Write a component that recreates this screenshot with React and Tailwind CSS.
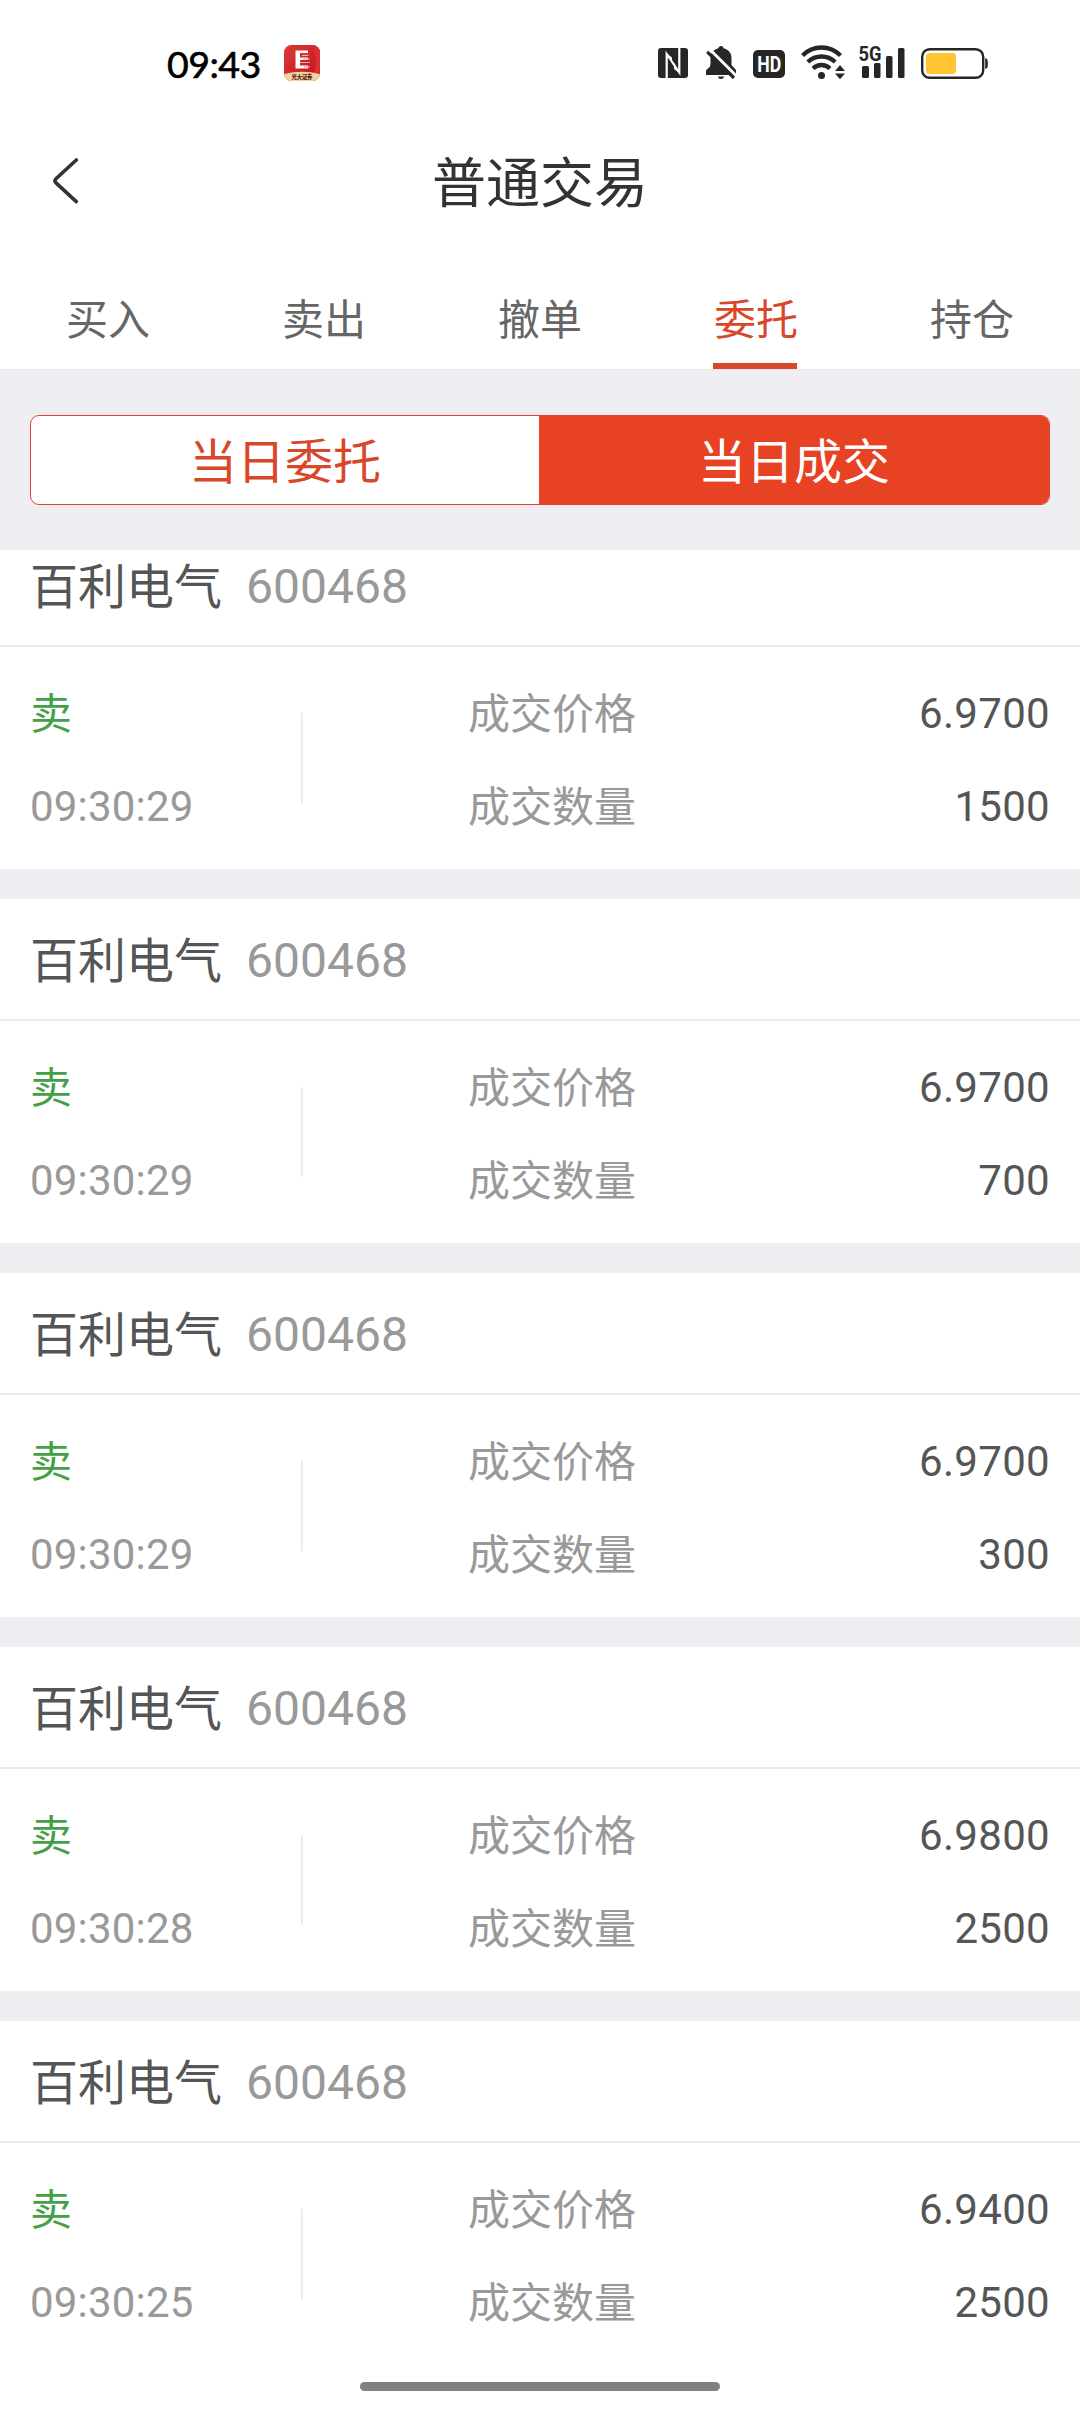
const trades = [
  { time: '09:30:29', price: '6.9700', amount: '1500' },
  { time: '09:30:29', price: '6.9700', amount: '700' },
  { time: '09:30:29', price: '6.9700', amount: '300' },
  { time: '09:30:28', price: '6.9800', amount: '2500' },
  { time: '09:30:25', price: '6.9400', amount: '2500' },
];

const tabs = ['买入', '卖出', '撤单', '委托', '持仓'];

function BrokerIcon() {
  return (
    <svg width="36" height="36" viewBox="0 0 36 36">
      <defs>
        <clipPath id="tile"><rect width="36" height="36" rx="7.5" /></clipPath>
        <linearGradient id="red" x1="0" y1="0" x2="1" y2="1">
          <stop offset="0" stopColor="#dd3a3a" />
          <stop offset="1" stopColor="#c01216" />
        </linearGradient>
      </defs>
      <g clipPath="url(#tile)">
        <rect width="36" height="36" fill="url(#red)" />
        <path d="M28 0 Q35 12 30 28 L36 28 V0Z" fill="#d63030" />
        <path d="M0 29 Q18 24.5 36 29 V36 H0Z" fill="#f3d3a2" />
        <path d="M11.500 5.500H24V8H16V12.500H24V15H16V20.500H24V23.500H11.500Z" fill="#fff" />
        <path d="M18 10.300H24.500M16 17.500H26M20 21.800H26M19 14H26" stroke="#f3a9a4" strokeWidth="1.200" />
        <text x="18" y="34" fontSize="5.400" fontWeight="900" textAnchor="middle" fill="#5a2414" textLength="21">光大证券</text>
      </g>
    </svg>
  );
}

function StatusBar() {
  return (
    <div className="flex h-[125px] shrink-0 items-start pt-[45px] pr-[92px] pl-[167px]">
      <span className="h-9 w-[117px] font-['Lato'] text-[37.5px] leading-[37px] tracking-[-0.5px] text-black [-webkit-text-stroke:0.6px_black]">09:43</span>
      <BrokerIcon />
      <div className="ml-auto flex h-[34px] text-[#262626]">
        <svg className="mr-[18px]" width="30" height="34" viewBox="0 0 30 34">
          <rect y="3" width="30" height="30" rx="3" fill="currentColor" />
          <path d="M8.700 33V9L21.300 27.500V3" fill="none" stroke="#fff" strokeWidth="2.200" />
          <path d="M8.700 8.500L14 12.500V18ZM21.300 28L16 24V18Z" fill="#fff" />
        </svg>
        <svg className="mr-[17px]" width="30" height="34" viewBox="0 0 30 34">
          <path d="M15 1C16.600 1 17.300 2 17.500 3.200C22.500 4.500 25.500 8 25.500 13V20L30 25V30H0V26Q0 24.500 2 23.500Q4.500 22 4.500 19V13C4.500 8 7.500 4.500 12.500 3.200C12.700 2 13.400 1 15 1Z" fill="currentColor" />
          <path d="M11.800 31.500H18.200Q17.500 34 15 34Q12.500 34 11.800 31.500Z" fill="currentColor" />
          <path d="M3.200 3.800L31.500 32.100" stroke="#fff" strokeWidth="3" />
          <path d="M0 4L0 0H6Z" fill="#fff" />
          <path d="M1.200 6.800L28 33" stroke="currentColor" strokeWidth="3.200" />
        </svg>
        <svg className="mr-4 overflow-visible" width="32" height="34" viewBox="0 0 32 34">
          <rect y="5" width="32" height="28" rx="5" fill="currentColor" />
          <text x="4.300" y="26.700" fontFamily="Roboto" fontSize="22" fontWeight="700" textLength="24" lengthAdjust="spacingAndGlyphs" fill="#fff">HD</text>
        </svg>
        <svg className="mr-3.5" width="44" height="34" viewBox="0 0 44 34">
          <g fill="none" stroke="currentColor" strokeWidth="4.300">
            <path d="M1.500 10.500Q9.500 2.500 20.500 2.500Q31.500 2.500 39.500 10.500" />
            <path d="M6.800 17Q12.500 11.500 20.500 11.500Q28.500 11.500 34.200 17" />
            <path d="M12 23.500Q15.800 20 20.500 20Q25.200 20 29 23.500" />
          </g>
          <circle cx="20.500" cy="30.500" r="3.500" fill="currentColor" />
          <path d="M39 20L44 26H34ZM39 34.200L34 28.500H44Z" fill="currentColor" />
        </svg>
        <svg className="mr-4 overflow-visible" width="46" height="34" viewBox="0 0 46 34">
          <g fill="currentColor">
            <rect x="3" y="21" width="7" height="12" rx="1.500" />
            <rect x="15" y="18" width="6.500" height="15" rx="1.500" />
            <rect x="27" y="11" width="6.500" height="22" rx="1.500" />
            <rect x="39" y="3" width="6.500" height="30" rx="1.500" />
            <text x="-0.500" y="16" fontFamily="Roboto" fontSize="20.500" fontWeight="700" textLength="23" lengthAdjust="spacingAndGlyphs">5G</text>
          </g>
        </svg>
        <svg width="67" height="34" viewBox="0 0 67 34">
          <rect x="1.200" y="4.200" width="61" height="28.600" rx="7.500" fill="none" stroke="currentColor" strokeWidth="2.400" />
          <rect x="5" y="8" width="30" height="21" rx="3.500" fill="#ffc431" />
          <path d="M64.200 13Q66.800 13.500 66.800 16V21Q66.800 23.500 64.200 24Z" fill="currentColor" />
        </svg>
      </div>
    </div>
  );
}

function TradeCard({ time, price, amount }) {
  return (
    <article className="h-[344px] shrink-0 bg-white">
      <header className="flex h-[122px] items-center gap-6 border-b-2 border-[#ebebeb] px-[30px] text-5xl">
        <span className="pt-1.5 text-[#555]">百利电气</span>
        <span className="pt-[3px] text-[#999]">600468</span>
      </header>
      <div className="flex px-[30px] pt-[45px] text-[42px] leading-[46px] text-[#999]">
        <div className="flex w-[271px] flex-col gap-[46px]">
          <span className="text-[#43a047]">卖</span>
          <span className="tracking-[0.2px]">{time}</span>
        </div>
        <div className="mt-[21px] h-[90px] w-0.5 bg-[#ebebeb]" />
        <div className="ml-[165px] flex flex-col gap-[47px]">
          <span>成交价格</span>
          <span>成交数量</span>
        </div>
        <div className="-mt-px ml-auto flex flex-col gap-[47px] text-right tracking-[0.3px] text-[#555]">
          <span>{price}</span>
          <span>{amount}</span>
        </div>
      </div>
    </article>
  );
}

export default function App() {
  return (
    <div className="flex h-[2412px] w-[1080px] flex-col overflow-hidden bg-white font-['Roboto','Noto_Sans_CJK_SC',sans-serif]">
      <StatusBar />
      <div className="grid h-[115px] shrink-0 grid-cols-3 items-center px-[50px]">
        <svg width="30" height="50" viewBox="0 0 30 50" fill="none" stroke="#333" strokeWidth="3.600" strokeLinecap="round">
          <path d="M26.300 2L6 20.800Q3.800 22.800 6 24.800L26.300 43.600" />
        </svg>
        <h1 className="pt-1 text-center text-[54px] leading-[60px] text-[#333]">普通交易</h1>
      </div>
      <nav className="grid h-[130px] shrink-0 grid-cols-5 border-b border-[#e6e6e6] text-[42px] leading-[60px] text-[#666]">
        {tabs.map((tab) => (
          <div key={tab} className="flex justify-center">
            <span className={tab === '委托' ? 'relative pt-[51px] text-[#d9472b]' : 'pt-[51px]'}>
              {tab}
              {tab === '委托' && <i className="absolute bottom-0 -left-px h-1.5 w-[84px] bg-[#d9472b]" />}
            </span>
          </div>
        ))}
      </nav>
      <div className="h-[180px] shrink-0 bg-[#efeef3] px-[30px] pt-[45px]">
        <div className="grid h-[90px] grid-cols-[508px_1fr] overflow-hidden rounded-[9px] border border-[#d9472b] bg-white text-center text-5xl leading-[94px]">
          <span className="text-[#d9472b]">当日委托</span>
          <span className="bg-[#e84224] text-white">当日成交</span>
        </div>
      </div>
      <main className="flex h-[1815px] shrink-0 flex-col justify-end gap-[30px] overflow-hidden bg-[#efeef3]">
        {trades.map((trade, index) => (
          <TradeCard key={index} {...trade} />
        ))}
      </main>
      <footer className="flex justify-center pt-[17px]">
        <div className="h-[9px] w-[360px] rounded-full bg-[#808080]" />
      </footer>
    </div>
  );
}
